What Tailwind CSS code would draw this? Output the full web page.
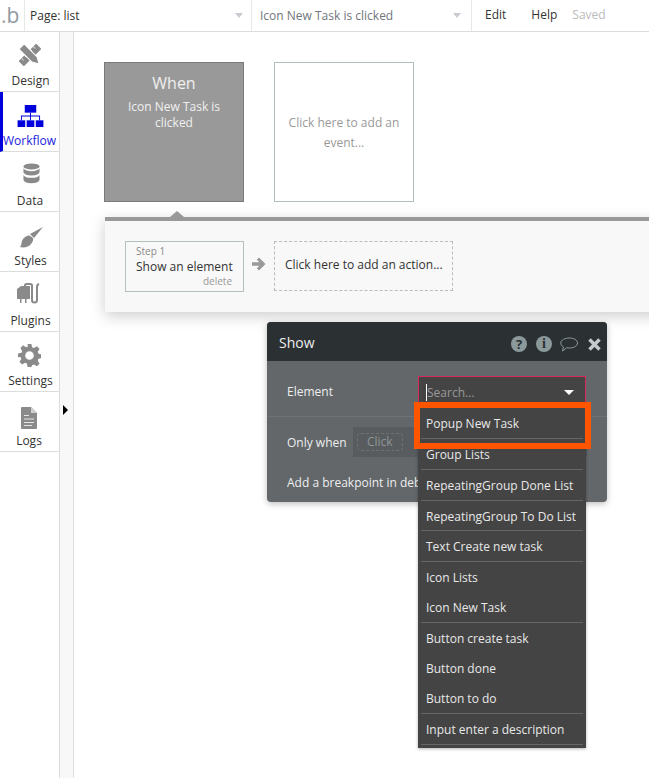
<!DOCTYPE html>
<html lang="en">
<head>
<meta charset="UTF-8">
<title>Workflow</title>
<script src="https://cdn.jsdelivr.net/npm/@tailwindcss/browser@4"></script>
</head>
<body class="bg-white font-['Open_Sans',sans-serif] overflow-hidden">
<div class="relative w-[649px] h-[778px] overflow-hidden">
  <!-- Top bar -->
  <div class="h-[32px] flex border-b border-[#dcdcdc] text-[12px]">
    <div class="w-[25px] border-r border-[#e8e8e8] pl-[1px] text-[21px] leading-[30px] text-[#a8a8a8]">.<span class="text-[#8f9aa3]">b</span></div>
    <div class="w-[227px] border-r border-[#e8e8e8] flex items-center pl-[5px] pr-[8px] justify-between text-[#333]">
      <span>Page: list</span>
      <span class="w-0 h-0 border-x-[4px] border-x-transparent border-t-[5px] border-t-[#c8ccd0]"></span>
    </div>
    <div class="w-[220px] border-r border-[#e8e8e8] flex items-center pl-[8px] pr-[10px] justify-between text-[#70767c]">
      <span>Icon New Task is clicked</span>
      <span class="w-0 h-0 border-x-[4px] border-x-transparent border-t-[5px] border-t-[#c8ccd0]"></span>
    </div>
    <div class="flex items-center pb-[2px] pl-[13px] text-[#333]">
      <span>Edit</span>
      <span class="ml-[25px]">Help</span>
      <span class="ml-[15px] text-[#bbb]">Saved</span>
    </div>
  </div>

  <div class="flex h-[746px]">
    <!-- Sidebar -->
    <div class="w-[60px] shrink-0 border-r border-[#dcdcdc] text-[12px] leading-[17px] text-[#333]">
      <div class="h-[60px] border-b border-[#dcdcdc] flex flex-col items-center">
        <div class="h-[40px] pt-[12px]">
          <svg class="w-[22px] h-[22px]" viewBox="0 0 24 24">
            <g transform="translate(12 12) rotate(45)">
              <rect x="-4" y="-13.500" width="8" height="27" fill="#8a8a8a"/>
              <path d="M-4-9h3M-4-4.500h3M-4 4.500h3M-4 9h3" stroke="#fff" stroke-width="1"/>
            </g>
            <g transform="translate(12 12) rotate(-45)" stroke="#fff" stroke-width="1.200">
              <path d="M-4-13h8V7L0 14-4 7z" fill="#8a8a8a"/>
            </g>
          </svg>
        </div>
        <span class="ml-[2px]">Design</span>
      </div>
      <div class="h-[60px] border-b border-[#dcdcdc] flex flex-col items-center border-l-[3px] border-l-[#0000dd] text-[#2222dd]">
        <div class="h-[40px] pt-[13px] ml-[-2px]">
          <svg class="w-[27px] h-[22px]" viewBox="0 0 27 23" fill="#0000dd"><rect x="7.500" y="0" width="12" height="8"/><rect x="0" y="16" width="8" height="7"/><rect x="9.500" y="16" width="8" height="7"/><rect x="19" y="16" width="8" height="7"/><path d="M13 8h1v3h9.500v5h-1v-4h-8.500v4h-1v-4H4.500v4h-1v-5H13z"/></svg>
        </div>
        <span class="ml-[-3px]">Workflow</span>
      </div>
      <div class="h-[60px] border-b border-[#dcdcdc] flex flex-col items-center">
        <div class="h-[40px] pt-[11px] ml-[3px]">
          <svg class="w-[17px] h-[21px]" viewBox="0 0 18 22" fill="#8a8a8a"><ellipse cx="9" cy="3.500" rx="8.500" ry="3.200"/><path d="M.5 5.500c1 2 4 3 8.500 3s7.500-1 8.500-3v4.500c-1 2-4 3.200-8.500 3.200S1.500 12 .5 10zM.5 12.500c1 2 4 3 8.500 3s7.500-1 8.500-3v5.500c-1 2.200-4 3.400-8.500 3.400S1.500 20.200.5 18z"/></svg>
        </div>
        <span class="ml-[1px]">Data</span>
      </div>
      <div class="h-[60px] border-b border-[#dcdcdc] flex flex-col items-center">
        <div class="h-[40px] pt-[15px] ml-[3px]">
          <svg class="w-[23px] h-[21px]" viewBox="0 0 23 21" fill="#8a8a8a"><path d="M23 0L10 7l4 4zM9.500 8.500C6 8.500 3 11 2 14c-.5 3-1 5-2 6 4 1 9 0 11-3 2-2.500 2.500-4.500 2-6z"/></svg>
        </div>
        <span class="ml-[2px]">Styles</span>
      </div>
      <div class="h-[60px] border-b border-[#dcdcdc] flex flex-col items-center">
        <div class="h-[40px] pt-[11px]">
          <svg class="w-[25px] h-[21px]" viewBox="0 0 25 21" fill="none"><path d="M0 6l4-3h9v13H9.500v4H8v-4H4.500v4H3v-4H0z" fill="#8a8a8a"/><path d="M8 3V2.500A1.500 1.500 0 0 1 9.500 1h4A1.500 1.500 0 0 1 15 2.500V17a2.500 2.500 0 0 0 5 0V4c0-1.500.5-2.500 2-3" stroke="#8a8a8a" stroke-width="2"/></svg>
        </div>
        <span class="ml-[2px]">Plugins</span>
      </div>
      <div class="h-[60px] border-b border-[#dcdcdc] flex flex-col items-center">
        <div class="h-[40px] pt-[12px]">
          <svg class="w-[23px] h-[23px]" viewBox="0 0 24 24" fill="#8a8a8a"><path fill-rule="evenodd" d="M10 0h4l.7 3.400 2 .8L19.700 2.300l2.800 2.800-1.900 3 .8 2 3.600.7v4l-3.600.7-.8 2 1.900 3-2.800 2.800-3-1.900-2 .8L14 24h-4l-.7-3.700-2-.8-3 1.900-2.800-2.800 1.900-3-.8-2L0 13.900v-4l3.600-.7.8-2-1.900-3 2.800-2.800 3 1.900 2-.8zM12 7.500a4.500 4.500 0 1 0 0 9 4.500 4.500 0 0 0 0-9z"/></svg>
        </div>
        <span class="ml-[2px]">Settings</span>
      </div>
      <div class="h-[60px] border-b border-[#dcdcdc] flex flex-col items-center">
        <div class="h-[40px] pt-[15px] ml-[-1px]">
          <svg class="w-[16px] h-[22px]" viewBox="0 0 16 22"><path d="M1 0h9l6 6v15a1 1 0 0 1-1 1H1a1 1 0 0 1-1-1V1a1 1 0 0 1 1-1z" fill="#8a8a8a"/><path d="M10 0l6 6h-6z" fill="#d0d0d0"/><path d="M3 8h5v1H3zM3 11.500h10v1H3zM3 15h10v1H3zM3 18h8v1H3z" fill="#e6e6e6"/></svg>
        </div>
        <span class="ml-[-1px]">Logs</span>
      </div>
    </div>
    <!-- Collapse strip -->
    <div class="w-[14px] shrink-0 bg-[#f8f8f8] border-r border-[#e0e0e0] relative">
      <span class="absolute left-[3px] top-[373px] w-0 h-0 border-y-[5px] border-y-transparent border-l-[5px] border-l-black"></span>
    </div>
    <!-- Canvas -->
    <div class="flex-1 min-w-0 pt-[30px] pl-[30px]">
      <div class="flex gap-[30px]">
        <div class="w-[140px] h-[140px] bg-[#999] border border-[#7a7a7a] text-white/85 text-center">
          <div class="mt-[9px] text-[16px] leading-[22px]">When</div>
          <div class="mt-[5px] px-[16px] text-[12px] leading-[16px]">Icon New Task is clicked</div>
        </div>
        <div class="w-[140px] h-[140px] border border-[#b4c0c0] flex items-center justify-center text-center text-[12px] leading-[20px] text-[#999] px-[10px] pt-[2px]">Click here to add an event...</div>
      </div>
      <div class="relative mt-[15px] ml-[1px] w-[560px] h-[95px] border-t-[4px] border-[#999] bg-[#f8f8f8] shadow-[0_4px_14px_rgba(0,0,0,0.2)] pt-[20px] pl-[20px] flex">
        <span class="absolute left-[65px] top-[-10px] w-0 h-0 border-x-[7px] border-x-transparent border-b-[6px] border-b-[#999]"></span>
        <div class="w-[119px] h-[51px] border border-[#b4c0c0] relative pl-[10px] pt-[3px]">
          <div class="text-[10px] leading-[13px] text-[#888]">Step 1</div>
          <div class="text-[12px] leading-[17px] text-[#333]">Show an element</div>
          <div class="absolute right-[11px] bottom-[3px] text-[10px] leading-[13px] text-[#999]">delete</div>
        </div>
        <svg class="ml-[8px] mt-[16px] w-[14px] h-[14px]" viewBox="0 0 14 14" fill="#999"><path d="M7 .5L13.500 7 7 13.500l-2.200-2.200 2.600-2.500H0V5.200h7.400L4.800 2.700z"/></svg>
        <div class="ml-[8px] w-[179px] h-[50px] border border-dashed border-[#bbb] flex items-center pl-[10px] pb-[2px] text-[12px] text-[#333]">Click here to add an action...</div>
      </div>
    </div>
  </div>

  <!-- Show dialog -->
  <div class="absolute left-[267px] top-[322px] w-[340px] h-[180px] rounded-[4px] bg-[#63676a] shadow-[0_2px_6px_rgba(0,0,0,0.25)] text-[12px] leading-[17px] text-[#eee] overflow-hidden">
    <div class="h-[39px] bg-[#2b3133] flex items-center pl-[12px] pr-[6px] justify-between">
      <span class="text-[14px] text-[#eee] pt-[1px]">Show</span>
      <div class="flex items-center mt-[5px]">
        <span class="w-[16px] h-[16px] rounded-full bg-[#8c999b] text-[#2b3133] text-[13px] font-bold leading-[16px] text-center">?</span>
        <span class="ml-[9px] w-[16px] h-[16px] rounded-full bg-[#8c999b] text-[#2b3133] text-[14px] font-bold leading-[16px] text-center font-['Liberation_Serif',serif]">i</span>
        <svg class="ml-[8px] w-[18px] h-[15px]" viewBox="0 0 18 15" fill="none" stroke="#8c999b"><path d="M9.500 1c4.200 0 8 2 8 5s-3.600 5-8 5c-1 0-2 0-2.800-.3L2.500 14 3.500 10C1.500 9 .8 7.500.8 6c0-3 4.200-5 8.700-5z"/></svg>
        <svg class="ml-[10px] w-[13px] h-[13px]" viewBox="0 0 13 13" stroke="#c4cacc" stroke-width="3.500"><path d="M1.500 1.500l10 10M11.500 1.500l-10 10"/></svg>
      </div>
    </div>
    <div class="h-[56px] border-b border-[#6e7275] pl-[20px] pt-[22px]">Element</div>
    <div class="flex items-center pl-[20px] pt-[10px]">
      <span class="w-[66px]">Only when</span>
      <div class="w-[234px] h-[30px] bg-[#585c5e] flex items-center pl-[4px]">
        <span class="border border-dashed border-[#6e7275] rounded-[4px] px-[9px] h-[18px] leading-[16px] text-[#8f9496]">Click</span>
      </div>
    </div>
    <div class="pl-[20px] pt-[17px]">Add a breakpoint in deb</div>
  </div>

  <!-- Element dropdown -->
  <div class="absolute left-[418px] top-[376px] w-[168px]">
    <div class="h-[33px] bg-[#444] border border-[#d9275c] flex items-center pl-[7px] pr-[11px] justify-between text-[12px]">
      <span class="border-l border-white leading-[17px] text-[#999]">Search...</span>
      <span class="w-0 h-0 border-x-[5px] border-x-transparent border-t-[5px] border-t-white"></span>
    </div>
    <ul class="bg-[#444] text-[12px] leading-[32px] text-[#e8e8e8] h-[340px] px-[3px] shadow-[0_1px_3px_rgba(0,0,0,0.3)] mt-[-1px]">
      <li class="h-[31px] pl-[5px] border-b border-[#666]">Popup New Task</li>
      <li class="h-[31px] pl-[5px] border-b border-[#666]">Group Lists</li>
      <li class="h-[31px] pl-[5px] border-b border-[#666]">RepeatingGroup Done List</li>
      <li class="h-[30px] pl-[5px] border-b border-[#666]">RepeatingGroup To Do List</li>
      <li class="h-[31px] pl-[5px] border-b border-[#666]">Text Create new task</li>
      <li class="h-[30px] pl-[5px]">Icon Lists</li>
      <li class="h-[31px] pl-[5px] border-b border-[#666]">Icon New Task</li>
      <li class="h-[30px] pl-[5px]">Button create task</li>
      <li class="h-[30px] pl-[5px]">Button done</li>
      <li class="h-[31px] pl-[5px] border-b border-[#666]">Button to do</li>
      <li class="h-[31px] pl-[5px] border-b border-[#666]">Input enter a description</li>
    </ul>
  </div>

  <!-- Highlight box -->
  <div class="absolute left-[414px] top-[402px] w-[177px] h-[47px] border-[6px] border-[#ff5500]"></div>
</div>
</body>
</html>
